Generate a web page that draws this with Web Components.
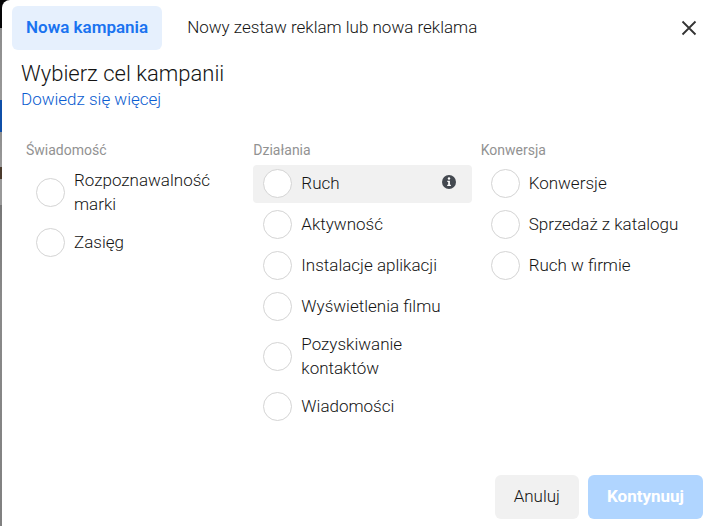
<!DOCTYPE html>
<html lang="pl">
<head>
<meta charset="utf-8">
<meta name="viewport" content="width=device-width, initial-scale=1">
<title>Nowa kampania</title>
<style>
    body {
        margin: 0;
        font-family: Roboto, "Liberation Sans", sans-serif;
        font-weight: 300;
        color: #141414;
    }
</style>
</head>
<body>
<campaign-dialog>
    <dialog-tab slot="tabs" selected>Nowa kampania</dialog-tab>
    <dialog-tab slot="tabs">Nowy zestaw reklam lub nowa reklama</dialog-tab>

    <span slot="title">Wybierz cel kampanii</span>

    <objective-group heading="Świadomość">
        <objective-option>Rozpoznawalność marki</objective-option>
        <objective-option>Zasięg</objective-option>
    </objective-group>
    <objective-group heading="Działania">
        <objective-option active>Ruch</objective-option>
        <objective-option>Aktywność</objective-option>
        <objective-option>Instalacje aplikacji</objective-option>
        <objective-option>Wyświetlenia filmu</objective-option>
        <objective-option>Pozyskiwanie kontaktów</objective-option>
        <objective-option>Wiadomości</objective-option>
    </objective-group>
    <objective-group heading="Konwersja">
        <objective-option>Konwersje</objective-option>
        <objective-option>Sprzedaż z katalogu</objective-option>
        <objective-option>Ruch w firmie</objective-option>
    </objective-group>

    <dialog-button slot="actions">Anuluj</dialog-button>
    <dialog-button slot="actions" primary>Kontynuuj</dialog-button>
</campaign-dialog>

<script>
// Dialog
class CampaignDialog extends HTMLElement {
    constructor() {
        super();
        this.attachShadow({ mode: 'open' });
    }

    connectedCallback() {
        this.shadowRoot.innerHTML = `
            <style>
                /* the dimmed page shows along the left edge */
                :host {
                    display: flex;
                    box-sizing: border-box;
                    min-height: 100vh;
                    padding-left: 2px;
                    background: linear-gradient(
                        #050507 28px, #8c8c8c 28px, #999 100px,
                        #0f4fa8 100px, #0f4fa8 132px,
                        #8e8e8e 132px, #999 167px,
                        #4a3a2c 167px, #4a3a2c 179px,
                        #999 179px, #999 205px,
                        #777 205px, #8a8a8a 300px, #808080
                    );
                }

                .dialog {
                    flex: 1;
                    display: flex;
                    flex-direction: column;
                    background: #fff;
                    border-radius: 8px 0 0 0;
                }

                .top {
                    display: flex;
                    justify-content: space-between;
                    align-items: center;
                    padding: 6px 10px;
                }

                .tabs {
                    display: flex;
                    gap: 11px;
                }

                .close {
                    display: flex;
                    padding: 4px;
                    border: 0;
                    background: none;
                    cursor: pointer;
                }

                .intro {
                    padding: 4px 19px 0;
                }

                h1 {
                    margin: 0;
                    font-size: 22px;
                    line-height: 28px;
                    font-weight: 300;
                }

                .intro a {
                    display: inline-block;
                    font-size: 17px;
                    line-height: 22px;
                    color: #0a5cd0;
                    text-decoration: none;
                }

                .groups {
                    flex: 1;
                    display: grid;
                    grid-template-columns: repeat(3, 1fr);
                    gap: 9px;
                    padding: 30px 12px 20px 24px;
                }

                .actions {
                    display: flex;
                    justify-content: flex-end;
                    gap: 9px;
                    padding: 0 8px 7px;
                }
            </style>
            <section class="dialog" role="dialog" aria-labelledby="title">
                <header class="top">
                    <div class="tabs"><slot name="tabs"></slot></div>
                    <button class="close" type="button" aria-label="Zamknij">
                        <svg width="16" height="16" viewBox="0 0 16 16" fill="none" stroke="#333" stroke-width="1.8">
                            <path d="M1.5 1.5l13 13M14.5 1.5l-13 13"/>
                        </svg>
                    </button>
                </header>
                <div class="intro">
                    <h1 id="title"><slot name="title"></slot></h1>
                    <a href="#">Dowiedz się więcej</a>
                </div>
                <div class="groups"><slot></slot></div>
                <footer class="actions"><slot name="actions"></slot></footer>
            </section>
        `;

        // Only one objective can be chosen across all groups
        this.addEventListener('objective-change', (event) => {
            this.querySelectorAll('objective-option').forEach(option => {
                if (option !== event.target) {
                    option.clear();
                }
            });
        });
    }
}

// Tab
class DialogTab extends HTMLElement {
    constructor() {
        super();
        this.attachShadow({ mode: 'open' });
    }

    connectedCallback() {
        this.shadowRoot.innerHTML = `
            <style>
                :host {
                    display: block;
                }

                button {
                    height: 44px;
                    padding: 0 14px 2px;
                    border: 0;
                    border-radius: 6px;
                    background: none;
                    color: inherit;
                    font: 300 17px/24px Roboto, "Liberation Sans", sans-serif;
                    cursor: pointer;
                }

                :host([selected]) button {
                    background: #e6f0fd;
                    color: #1a73f0;
                    font-weight: 600;
                }
            </style>
            <button type="button"><slot></slot></button>
        `;
    }
}

// Column of objectives
class ObjectiveGroup extends HTMLElement {
    constructor() {
        super();
        this.attachShadow({ mode: 'open' });
    }

    connectedCallback() {
        this.shadowRoot.innerHTML = `
            <style>
                :host {
                    display: block;
                }

                h2 {
                    margin: 0 0 5px;
                    color: #929292;
                    font-size: 14px;
                    line-height: 20px;
                    font-weight: 400;
                }

                .list {
                    display: flex;
                    flex-direction: column;
                    gap: 3px;
                }
            </style>
            <h2>${this.getAttribute('heading')}</h2>
            <div class="list"><slot></slot></div>
        `;
    }
}

// Single objective
class ObjectiveOption extends HTMLElement {
    constructor() {
        super();
        this.attachShadow({ mode: 'open' });
    }

    connectedCallback() {
        const info = this.hasAttribute('active') ? `
            <svg width="14" height="14" viewBox="0 0 14 14" aria-hidden="true">
                <circle cx="7" cy="7" r="7" fill="#444950"/>
                <circle cx="7" cy="3.5" r="1.2" fill="#fff"/>
                <path d="M5.3 5.7h2.6v4h1v1.2H5.2V9.7h1V6.9h-.9z" fill="#fff"/>
            </svg>` : '';

        this.shadowRoot.innerHTML = `
            <style>
                :host {
                    display: block;
                }

                label {
                    display: flex;
                    align-items: center;
                    gap: 9px;
                    box-sizing: border-box;
                    min-height: 38px;
                    padding: 3px 16px 5px 10px;
                    border-radius: 4px;
                    font-size: 17px;
                    line-height: 24px;
                    cursor: pointer;
                }

                :host([active]) label {
                    background: #f1f1f1;
                }

                input {
                    appearance: none;
                    flex: none;
                    box-sizing: border-box;
                    width: 29px;
                    height: 29px;
                    margin: 0;
                    border: 1px solid #d4d4d4;
                    border-radius: 50%;
                    background: #fff;
                }

                input:checked {
                    border: 8px solid #1a73f0;
                }

                .text {
                    flex: 1;
                }

                svg {
                    margin-bottom: 2px;
                }
            </style>
            <label>
                <input type="radio">
                <span class="text"><slot></slot></span>
                ${info}
            </label>
        `;

        this.shadowRoot.querySelector('input').addEventListener('change', () => {
            this.dispatchEvent(new CustomEvent('objective-change', { bubbles: true }));
        });
    }

    clear() {
        this.shadowRoot.querySelector('input').checked = false;
    }
}

// Footer button
class DialogButton extends HTMLElement {
    constructor() {
        super();
        this.attachShadow({ mode: 'open' });
    }

    connectedCallback() {
        this.shadowRoot.innerHTML = `
            <style>
                :host {
                    display: block;
                }

                button {
                    height: 44px;
                    padding: 0 19px 2px;
                    border: 0;
                    border-radius: 6px;
                    background: #f1f1f1;
                    color: inherit;
                    font: 300 17px/24px Roboto, "Liberation Sans", sans-serif;
                    cursor: pointer;
                }

                :host([primary]) button {
                    background: #b0d5ff;
                    color: #fff;
                    font-weight: 700;
                }
            </style>
            <button type="button"><slot></slot></button>
        `;
    }
}

customElements.define('campaign-dialog', CampaignDialog);
customElements.define('dialog-tab', DialogTab);
customElements.define('objective-group', ObjectiveGroup);
customElements.define('objective-option', ObjectiveOption);
customElements.define('dialog-button', DialogButton);
</script>
</body>
</html>
